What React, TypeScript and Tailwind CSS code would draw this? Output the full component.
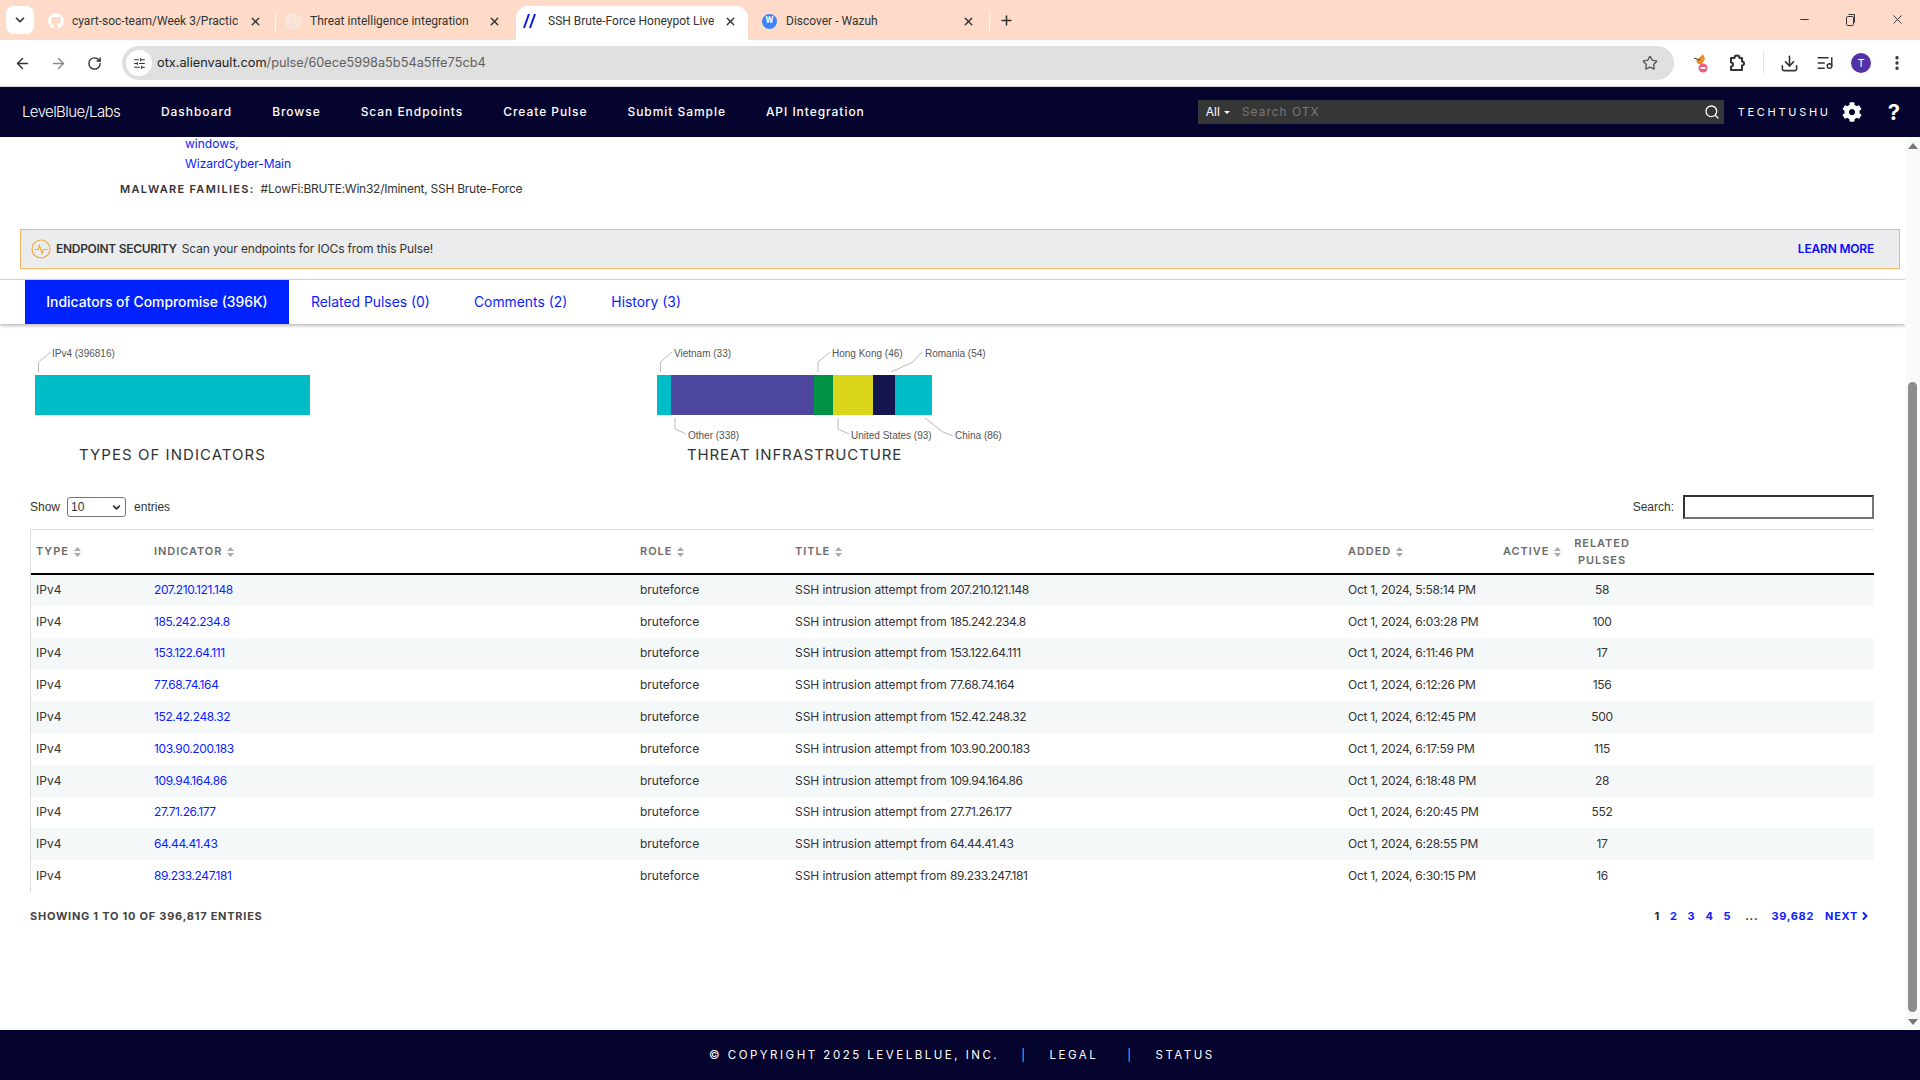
import { ArrowLeft, ArrowRight, ChevronDown, ChevronRight, Download, ListMusic, Minus, MoreVertical, Plus, RotateCw, Search, SlidersHorizontal, Star, X } from "lucide-react";
import { FaCog, FaGithub } from "react-icons/fa";
import { SiOpenai } from "react-icons/si";

const ROWS = [
  ["207.210.121.148", "5:58:14", "58"],
  ["185.242.234.8", "6:03:28", "100"],
  ["153.122.64.111", "6:11:46", "17"],
  ["77.68.74.164", "6:12:26", "156"],
  ["152.42.248.32", "6:12:45", "500"],
  ["103.90.200.183", "6:17:59", "115"],
  ["109.94.164.86", "6:18:48", "28"],
  ["27.71.26.177", "6:20:45", "552"],
  ["64.44.41.43", "6:28:55", "17"],
  ["89.233.247.181", "6:30:15", "16"],
];

const NAV = ["Dashboard", "Browse", "Scan Endpoints", "Create Pulse", "Submit Sample", "API Integration"];

function TabBar() {
  return (
    <div className="flex h-[40px] items-start bg-[#fddbc8] font-['Roboto'] text-[12px] text-[#333]">
      <div className="ml-[6px] mt-[6px] flex h-[28px] w-[28px] items-center justify-center rounded-lg bg-white">
        <ChevronDown size={14} strokeWidth={3} />
      </div>
      <div className="ml-[12px] mt-[6px] flex h-[34px] w-[229px] items-center pb-[4px]">
        <FaGithub size={16} className="ml-[2px] text-white" />
        <span className="ml-[8px] w-[166px] overflow-hidden whitespace-nowrap">cyart-soc-team/Week 3/Practica</span>
        <X size={13} strokeWidth={2.5} className="ml-[11px]" />
      </div>
      <div className="mt-[11px] h-[20px] w-px bg-white" />
      <div className="ml-[9px] mt-[6px] flex h-[34px] w-[231px] items-center pb-[4px]">
        <SiOpenai size={16} className="text-[#f4efec]" />
        <span className="ml-[9px] w-[160px] overflow-hidden whitespace-nowrap">Threat intelligence integration</span>
        <X size={13} strokeWidth={2.5} className="ml-[18px]" />
      </div>
      <div className="mt-[6px] flex h-[34px] w-[232px] items-center rounded-t-xl bg-white pb-[4px] pl-[7px]">
        <svg width="14" height="16" viewBox="0 0 14 16" fill="none" stroke="#0a1ee0" strokeWidth="2">
          <path d="M1 15 6 1M7 15 12 1" />
        </svg>
        <span className="ml-[11px] w-[166px] overflow-hidden whitespace-nowrap">SSH Brute-Force Honeypot Live</span>
        <X size={13} strokeWidth={2.5} className="ml-[10px]" />
      </div>
      <div className="ml-[14px] mt-[6px] flex h-[34px] w-[225px] items-center pb-[4px]">
        <div className="flex h-[15px] w-[15px] items-center justify-center rounded-full bg-[#3d82f6] text-[9px] font-bold text-white">W</div>
        <span className="ml-[9px] w-[176px] whitespace-nowrap">Discover - Wazuh</span>
        <X size={13} strokeWidth={2.5} />
      </div>
      <div className="ml-[2px] mt-[11px] h-[20px] w-px bg-white" />
      <Plus size={15} strokeWidth={2.5} className="ml-[9px] mt-[13px]" />
      <div className="flex-1" />
      <Minus size={13} className="mr-[33px] mt-[13px]" />
      <svg width="13" height="13" viewBox="0 0 13 13" fill="none" stroke="#333" className="mr-[33px] mt-[13px]">
        <rect x="2.5" y="3.5" width="7" height="9" rx="1" />
        <path d="M4.5 1.5h6v8" />
      </svg>
      <X size={15} strokeWidth={1.5} className="mr-[15px] mt-[12px]" />
    </div>
  );
}

function Toolbar() {
  return (
    <div className="flex h-[47px] items-center rounded-t-xl border-b border-[#d5d5d5] bg-white text-[#333]">
      <ArrowLeft size={17} strokeWidth={2} className="ml-[14px]" />
      <ArrowRight size={17} strokeWidth={2} className="ml-[19px] text-[#8a8a8a]" />
      <RotateCw size={15} strokeWidth={2.2} className="ml-[20px]" />
      <div className="ml-[20px] flex h-[34px] w-[1552px] items-center rounded-full bg-[#e0e0e0] pl-[4px]">
        <div className="flex h-[26px] w-[26px] items-center justify-center rounded-full bg-white">
          <SlidersHorizontal size={13} />
        </div>
        <span className="ml-[5px] text-[12.75px] text-[#222]">otx.alienvault.com</span>
        <span className="text-[12.75px] text-[#5f5f5f]">/pulse/60ece5998a5b54a5ffe75cb4</span>
        <div className="flex-1" />
        <Star size={16} className="mr-[16px] text-[#555]" />
      </div>
      <svg width="18" height="22" viewBox="0 0 18 22" className="ml-[18px]">
        <path d="M4 9 11 2l2 5-3 5H6z" fill="#e8902a" />
        <path d="M2 6l6 2" stroke="#333" strokeWidth="1" />
        <circle cx="11" cy="16" r="4.5" fill="#f0587c" />
        <rect x="8.5" y="15" width="5" height="2" fill="#fff" />
      </svg>
      <svg width="18" height="18" viewBox="0 0 18 18" fill="none" stroke="#333" strokeWidth="2" className="ml-[18px]">
        <path d="M3 4h3.5a2.5 2.5 0 0 1 5 0H14v3.5a2 2 0 0 1 0 4V16H3v-3.5a2 2 0 0 0 0-4z" strokeLinejoin="round" />
      </svg>
      <div className="ml-[17px] h-[22px] w-px bg-[#fddbc8]" />
      <Download size={19} strokeWidth={2} className="ml-[16px]" />
      <ListMusic size={18} strokeWidth={2} className="ml-[17px]" />
      <div className="ml-[17px] flex h-[20px] w-[20px] items-center justify-center rounded-full bg-[#5232a8] text-[11px] text-white">T</div>
      <MoreVertical size={18} strokeWidth={2.5} className="ml-[17px]" />
    </div>
  );
}

function NavBar() {
  return (
    <div className="flex h-[50px] items-center bg-[#04042e] text-white">
      <div className="ml-[22px] w-[139px] text-[15px] font-light tracking-[-0.6px]">LevelBlue/Labs</div>
      <div className="flex gap-10 text-[12px] font-medium tracking-[0.95px]">
        {NAV.map((n) => (
          <span key={n}>{n}</span>
        ))}
      </div>
      <div className="flex-1" />
      <div className="flex h-[24px] w-[526px] items-center bg-[#363636] pl-[8px] text-[12px]">
        <span>All</span>
        <span className="ml-[4px] border-x-[3px] border-t-[3px] border-x-transparent border-t-white" />
        <span className="ml-[12px] tracking-[1px] text-[#777]">Search OTX</span>
        <div className="flex-1" />
        <Search size={16} className="mr-[4px]" />
      </div>
      <span className="ml-[14px] text-[11px] tracking-[2.7px]">TECHTUSHU</span>
      <FaCog size={20} className="ml-[11px]" />
      <span className="ml-[26px] mr-[20px] text-[22px] font-bold leading-none">?</span>
    </div>
  );
}

function SortIcon() {
  return (
    <svg width="7" height="10" viewBox="0 0 7 10" className="ml-[5px] inline-block" fill="#a9a9a9">
      <path d="M3.5 0 7 4H0zM3.5 10 0 6h7z" />
    </svg>
  );
}

function Th({ label }: { label: string }) {
  return (
    <th className="px-[6px] text-left font-semibold first:pl-[5px]">
      <span className="whitespace-nowrap">
        {label}
        <SortIcon />
      </span>
    </th>
  );
}

function Charts() {
  return (
    <div className="mt-[21px] flex">
      <div className="ml-[30px] w-[620px]">
        <svg width="300" height="100" className="block font-['Liberation_Sans'] text-[10px]">
          <path d="M8.5 27V17L21 7" fill="none" stroke="#bbb" />
          <text x="22" y="12" fill="#555">IPv4 (396816)</text>
          <rect x="5" y="30" width="275" height="40" fill="#00bcc6" />
        </svg>
        <div className="ml-[5px] w-[275px] text-center text-[15px] leading-[20px] tracking-[1.05px] text-[#333]">TYPES OF INDICATORS</div>
      </div>
      <div>
        <svg width="380" height="100" className="block font-['Liberation_Sans'] text-[10px]">
          <g fill="none" stroke="#bbb">
            <path d="M10.5 27V17L22 7" />
            <path d="M168 27V17L180 7" />
            <path d="M241 27 263 17 272 7" />
            <path d="M25 73V84L36 89" />
            <path d="M188 73V84L199 89" />
            <path d="M275 73 293 87 303 91" />
          </g>
          <g fill="#555">
            <text x="24" y="12">Vietnam (33)</text>
            <text x="182" y="12">Hong Kong (46)</text>
            <text x="275" y="12">Romania (54)</text>
            <text x="38" y="94">Other (338)</text>
            <text x="201" y="94">United States (93)</text>
            <text x="305" y="94">China (86)</text>
          </g>
          <rect x="7" y="30" width="14" height="40" fill="#00bcc6" />
          <rect x="21" y="30" width="143" height="40" fill="#4d469e" />
          <rect x="164" y="30" width="19" height="40" fill="#009245" />
          <rect x="183" y="30" width="40" height="40" fill="#d9d61c" />
          <rect x="223" y="30" width="22" height="40" fill="#15154f" />
          <rect x="245" y="30" width="37" height="40" fill="#00bcc6" />
        </svg>
        <div className="ml-[7px] w-[275px] whitespace-nowrap text-center text-[15px] leading-[20px] tracking-[0.85px] text-[#333]">THREAT INFRASTRUCTURE</div>
      </div>
    </div>
  );
}

function IocTable() {
  return (
    <div className="ml-[30px] mt-[10px] w-[1844px] border-l border-t border-[#dcdcdc]">
      <table className="w-full table-fixed border-collapse text-[12px] text-[#333]">
        <colgroup>
          <col className="w-[117px]" />
          <col className="w-[486px]" />
          <col className="w-[155px]" />
          <col className="w-[553px]" />
          <col className="w-[155px]" />
          <col className="w-[72px]" />
          <col className="w-[66px]" />
          <col />
        </colgroup>
        <thead>
          <tr className="h-[44px] border-b-2 border-black text-[11px] tracking-[0.95px] text-[#6b6b6b]">
            <Th label="TYPE" />
            <Th label="INDICATOR" />
            <Th label="ROLE" />
            <Th label="TITLE" />
            <Th label="ADDED" />
            <Th label="ACTIVE" />
            <th className="text-center font-semibold leading-[17px]">RELATED<br />PULSES</th>
            <th />
          </tr>
        </thead>
        <tbody>
          {ROWS.map(([ip, time, pulses]) => (
            <tr key={ip} className="h-[31.8px] odd:bg-[#f5f8f9]">
              <td className="px-[5px]">IPv4</td>
              <td className="px-[6px] tracking-[-0.4px] text-[#0a1eff]">{ip}</td>
              <td className="px-[6px]">bruteforce</td>
              <td className="px-[6px] tracking-[-0.05px]">
                SSH intrusion attempt from <span className="tracking-[-0.4px]">{ip}</span>
              </td>
              <td className="px-[6px] tracking-[-0.3px]">Oct 1, 2024, {time} PM</td>
              <td />
              <td className="text-center tracking-[-0.3px]">{pulses}</td>
              <td />
            </tr>
          ))}
        </tbody>
      </table>
    </div>
  );
}

function Main() {
  return (
    <div className="flex min-w-0 flex-1 flex-col overflow-hidden text-[12px] text-[#333]">
      <div className="ml-[185px] h-[14px] leading-[14px] text-[#0a1eff]">windows,</div>
      <div className="ml-[185px] mt-[6px] h-[14px] leading-[14px] tracking-[-0.05px] text-[#0a1eff]">WizardCyber-Main</div>
      <div className="ml-[120px] mt-[11px] flex h-[14px] items-center">
        <span className="text-[11px] font-semibold tracking-[1.3px]">MALWARE FAMILIES:</span>
        <span className="ml-[6px] tracking-[-0.25px]">#LowFi:BRUTE:Win32/Iminent, SSH Brute-Force</span>
      </div>
      <div className="ml-[20px] mt-[33px] flex h-[40px] w-[1880px] items-center border border-[#f7b65f] bg-[#ebecee] pl-[10px]">
        <svg width="20" height="20" viewBox="0 0 20 20" fill="none" stroke="#f0a93c" strokeWidth="1.2">
          <circle cx="10" cy="10" r="9" />
          <path d="M3.5 10.5H7l1.5-4 2.5 8 1.5-4h4" />
        </svg>
        <span className="ml-[5px] font-semibold tracking-[-0.3px]">ENDPOINT SECURITY</span>
        <span className="ml-[5px] tracking-[-0.15px]">Scan your endpoints for IOCs from this Pulse!</span>
        <div className="flex-1" />
        <span className="mr-[25px] font-semibold tracking-[-0.2px] text-[#0a0aff]">LEARN MORE</span>
      </div>
      <div className="mt-[10px] flex h-[45px] items-stretch border-t border-[#d0d0d0] pl-[25px] text-[13.9px] text-[#0a1eff] shadow-[0_2px_3px_rgba(0,0,0,0.25)]">
        <div className="flex w-[264px] items-center justify-center bg-[#0022ff] font-medium text-white">Indicators of Compromise (396K)</div>
        <div className="ml-[22px] flex items-center">Related Pulses (0)</div>
        <div className="ml-[44px] flex items-center">Comments (2)</div>
        <div className="ml-[44px] flex items-center">History (3)</div>
      </div>
      <Charts />
      <div className="mt-[30px] flex h-[24px] items-center font-['Liberation_Sans'] text-[12px]">
        <span className="ml-[30px]">Show</span>
        <div className="ml-[7px] flex h-[20px] w-[59px] items-center justify-between rounded-[3px] border border-[#767676] px-[3px]">
          <span>10</span>
          <ChevronDown size={11} strokeWidth={4} />
        </div>
        <span className="ml-[8px]">entries</span>
        <div className="flex-1" />
        <span>Search:</span>
        <div className="ml-[9px] mr-[31px] h-[24px] w-[191px] border-2 border-b-[#767676] border-l-[#333] border-r-[#767676] border-t-[#333]" />
      </div>
      <IocTable />
      <div className="ml-[30px] mt-[17px] flex h-[14px] w-[1844px] items-center text-[11px] font-bold tracking-[0.75px]">
        <span className="text-[#444]">SHOWING 1 TO 10 OF 396,817 ENTRIES</span>
        <div className="flex-1" />
        <div className="flex items-center tracking-[0.7px] text-[#0a1eff]">
          <span className="text-[#222]">1</span>
          <span className="ml-[10px]">2</span>
          <span className="ml-[10px]">3</span>
          <span className="ml-[10px]">4</span>
          <span className="ml-[10px]">5</span>
          <span className="ml-[14px] text-[#222]">...</span>
          <span className="ml-[13px]">39,682</span>
          <span className="ml-[11px]">NEXT</span>
          <ChevronRight size={12} strokeWidth={4} className="ml-[1px] mr-[3px]" />
        </div>
      </div>
    </div>
  );
}

function Scrollbar() {
  return (
    <div className="flex w-[15px] flex-col items-center bg-[#fafafa]">
      <div className="mt-[6px] h-0 w-0 border-x-[5px] border-b-[6px] border-x-transparent border-b-[#777]" />
      <div className="mt-[233px] h-[630px] w-[9px] rounded-full bg-[#8c8c8c]" />
      <div className="mt-[7px] h-0 w-0 border-x-[5px] border-t-[6px] border-x-transparent border-t-[#777]" />
    </div>
  );
}

export default function App() {
  return (
    <div className="flex h-[1080px] w-[1920px] flex-col overflow-hidden bg-white font-['Inter',sans-serif]">
      <TabBar />
      <Toolbar />
      <NavBar />
      <div className="flex min-h-0 flex-1">
        <Main />
        <Scrollbar />
      </div>
      <div className="flex h-[50px] items-center bg-[#04042e] pl-[709px] pt-px text-[11.5px] tracking-[2.5px] text-white">
        <span>© COPYRIGHT 2025 LEVELBLUE, INC.</span>
        <span className="ml-[22px] text-[#6fc7ee]">|</span>
        <span className="ml-[22px]">LEGAL</span>
        <span className="ml-[29px] text-[#6fc7ee]">|</span>
        <span className="ml-[22px]">STATUS</span>
      </div>
    </div>
  );
}
